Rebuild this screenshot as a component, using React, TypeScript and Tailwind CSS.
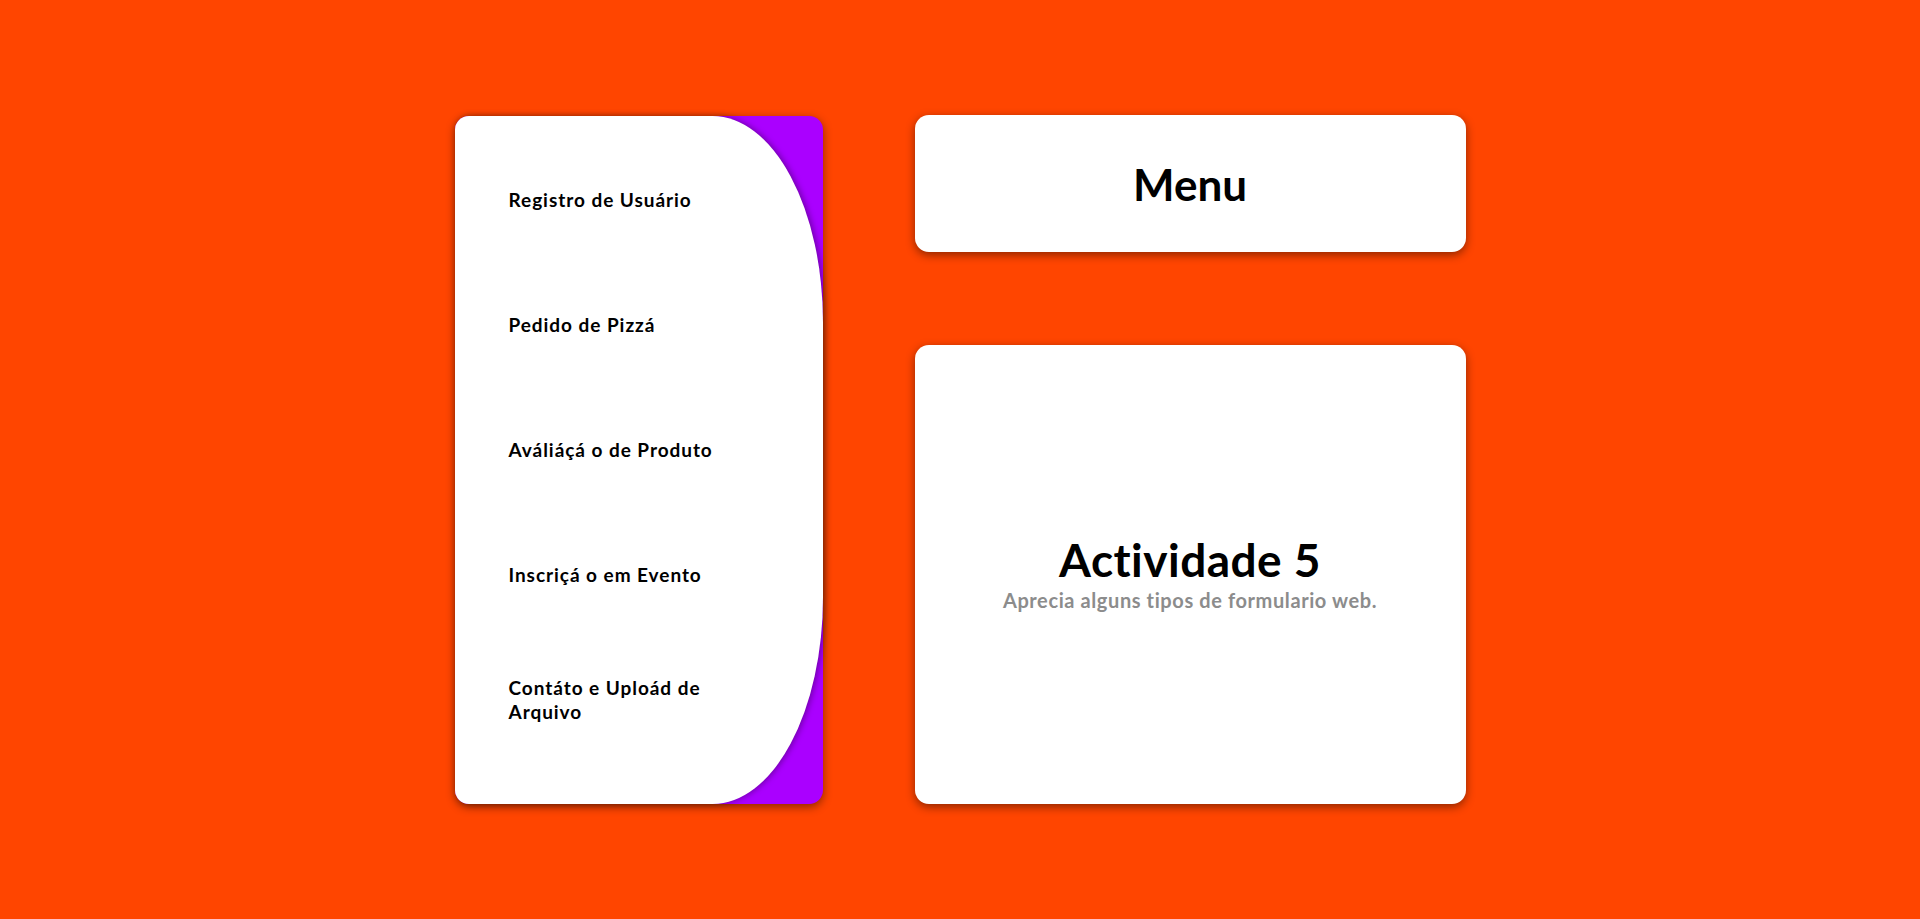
const items = [
  "Registro de Usuário",
  "Pedido de Pizzá",
  "Aváliáçá o de Produto",
  "Inscriçá o em Evento",
  "Contáto e Uploád de Arquivo",
];

export default function App() {
  return (
    <div
      className="h-[919px] w-full bg-[#ff4500] flex items-center justify-center gap-[92px] overflow-hidden"
      style={{ fontFamily: "Lato, 'Open Sans', sans-serif" }}
    >
      {/* side menu */}
      <div className="w-[368px] h-[688px] rounded-[14px] bg-[#aa00ff] shadow-[0_3px_10px_rgba(0,0,0,0.45)]">
        <div className="h-full w-full bg-white rounded-l-[14px] rounded-r-[30%] shadow-[2px_0_6px_rgba(0,0,0,0.35)] pl-[54px] pt-[22px]">
          {items.map((label) => (
            <div key={label} className="h-[125px] flex items-center">
              <a href="#" className="w-[236px] text-[19px] font-bold tracking-[0.05em] leading-[24px] text-black">
                {label}
              </a>
            </div>
          ))}
        </div>
      </div>

      <div className="w-[551px] flex flex-col gap-[93px]">
        <div className="h-[137px] bg-white rounded-[14px] shadow-[0_3px_10px_rgba(0,0,0,0.45)] flex items-center justify-center">
          <h1 className="text-[44px] font-bold leading-none text-black">Menu</h1>
        </div>
        <div className="h-[459px] bg-white rounded-[14px] shadow-[0_3px_10px_rgba(0,0,0,0.45)] flex flex-col items-center justify-center">
          <h2 className="text-[46px] font-bold tracking-[0.01em] leading-[1.05] text-black">Actividade 5</h2>
          <p className="mt-[3px] text-[20px] font-bold tracking-[0.03em] leading-tight text-[#8c8c8c]">
            Aprecia alguns tipos de formulario web.
          </p>
        </div>
      </div>
    </div>
  );
}
